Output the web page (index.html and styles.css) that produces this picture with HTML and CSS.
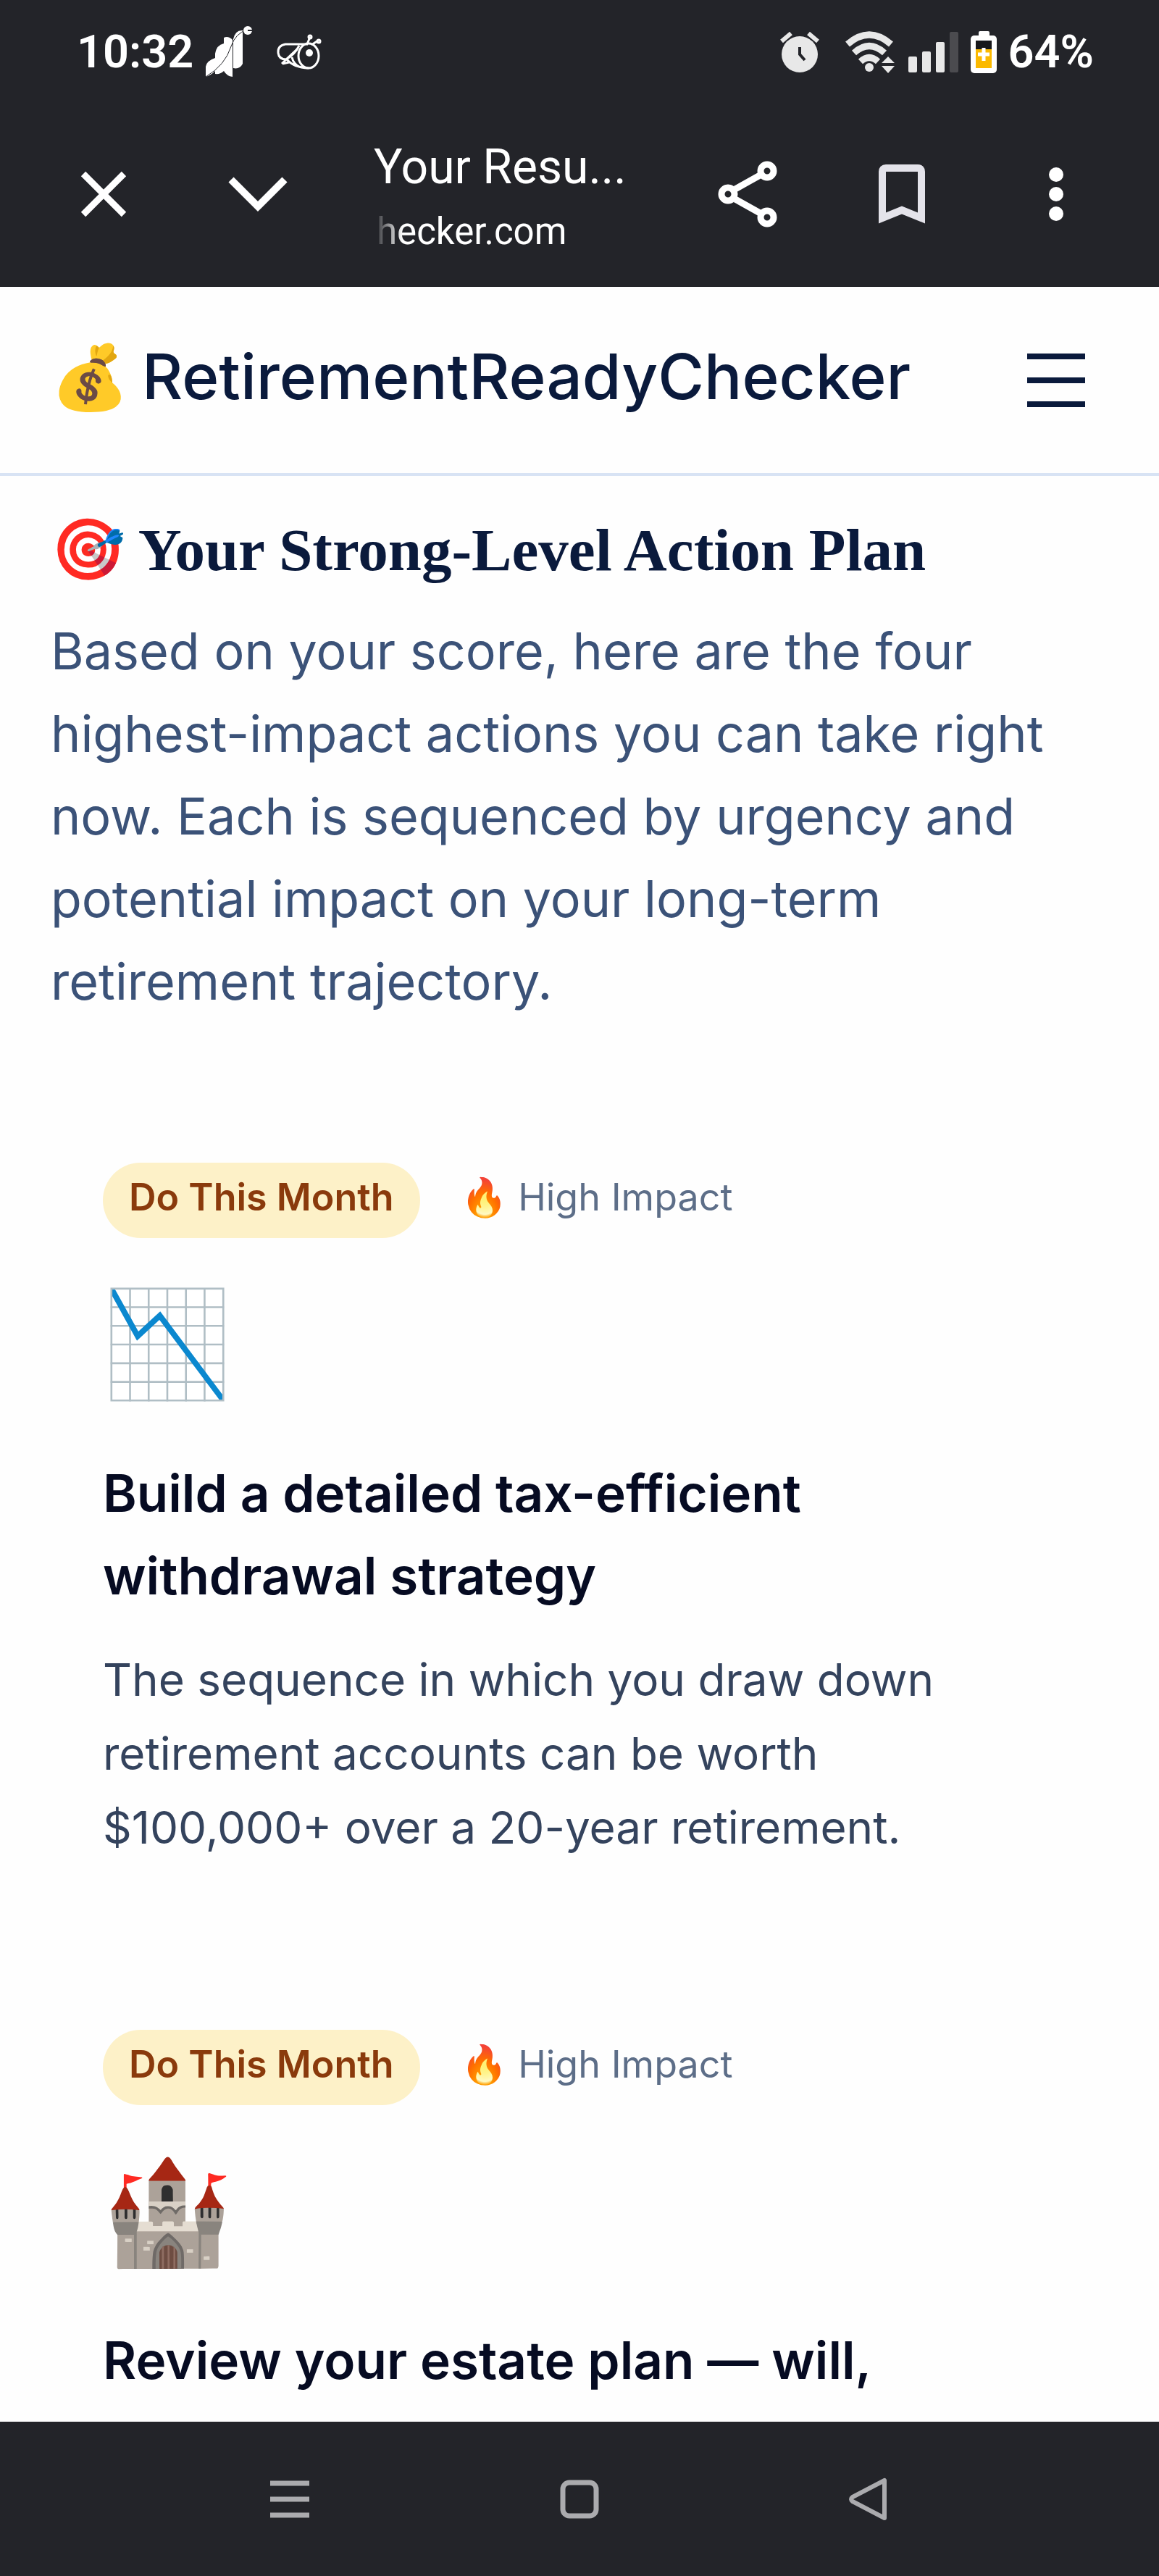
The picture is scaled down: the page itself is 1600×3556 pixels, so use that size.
FILE: index.html
```html
<!DOCTYPE html>
<html lang="en">
<head>
<meta charset="utf-8">
<meta name="viewport" content="width=device-width, initial-scale=1">
<title>Your Results</title>
<link rel="stylesheet" href="styles.css">
</head>
<body>
<div class="chrome">
  <div class="status">
    <div class="status-side">
      <span class="clock">10:32</span>
      <svg class="app-butterfly" width="66" height="72" viewBox="0 0 66 72" fill="#fff" aria-hidden="true">
        <path d="M1 70V56q1-8 13-12V62Q8 68 1 70z"/>
        <path d="M14 66V38q2-12 12-14V62q-5 5-12 4z"/>
        <path d="M26 62V16q6-3 12 3V70q-8-1-12-8z"/>
        <path d="M39 58V18Q42 5 52 6V52q-4 8-13 6z"/>
        <path d="M1 70Q28 54 36 28Q42 10 58 5" fill="none" stroke="#232429" stroke-width="1"/>
        <circle cx="59" cy="6" r="6"/><path d="M59 6h7" stroke="#232429" stroke-width="2"/>
      </svg>
      <svg class="app-bee" width="66" height="52" viewBox="0 0 66 52" fill="none" stroke="#fff" stroke-width="3" aria-hidden="true">
        <path d="M44 15H13Q2 17 3 27Q4 36 14 36Q26 29 32 17"/>
        <ellipse cx="45" cy="31" rx="14" ry="17"/>
        <path d="M29 22Q16 34 8 42M9 42L18 40M15 36Q24 47 45 48M22 33Q24 42 32 46"/>
        <path d="M43 15L47 5M49 16L58 10"/><circle cx="47" cy="5" r="2"/><circle cx="59" cy="11" r="2"/>
        <circle cx="46" cy="27" r="5" fill="#fff" stroke="none"/>
      </svg>
    </div>
    <div class="status-side">
      <svg class="alarm" width="56" height="58" viewBox="0 0 56 58" aria-hidden="true">
        <circle cx="28" cy="32" r="25" fill="#e8e8e8"/>
        <path d="M3 14L16 3M53 14L40 3" stroke="#e8e8e8" stroke-width="6"/>
        <path d="M28 22V32L35 40" stroke="#232429" stroke-width="4" fill="none"/>
      </svg>
      <svg class="wifi" width="70" height="58" viewBox="0 0 70 58" aria-hidden="true">
        <g fill="none" stroke="#e8e8e8" stroke-width="9">
          <path d="M4 18Q34-8 64 18"/><path d="M13 30Q34 11 55 30"/><path d="M22 42Q34 31 46 42"/>
        </g>
        <circle cx="34" cy="50" r="6" fill="#e8e8e8"/>
        <path d="M60 31L71 45H49zM60 62L71 46H49z" fill="#232429"/>
        <path d="M60 35L69 44H51zM60 58L69 48H51z" fill="#e8e8e8"/>
      </svg>
      <svg class="signal" width="70" height="56" viewBox="0 0 70 56" fill="#e8e8e8" aria-hidden="true">
        <rect y="34" width="12" height="22" rx="2"/><rect x="19" y="27" width="12" height="29" rx="2"/>
        <rect x="38" y="14" width="12" height="42" rx="2"/><rect x="57" width="12" height="56" rx="2" fill="#4b4b4f"/>
      </svg>
      <svg class="battery" width="36" height="58" viewBox="0 0 36 58" aria-hidden="true">
        <rect x="11" width="15" height="10" rx="2" fill="#fff"/><rect y="6" width="36" height="52" rx="5" fill="#fff"/>
        <path d="M7 13h22v12H7z" fill="#17171b"/><path d="M7 25h22v26H7z" fill="#fbb900"/>
        <path d="M18 23v18M10 32h16" stroke="#fff" stroke-width="5"/>
      </svg>
      <span class="percent">64%</span>
    </div>
  </div>
  <div class="toolbar">
    <button class="tool" aria-label="Close"><svg width="64" height="64" viewBox="0 0 64 64" fill="none" stroke="#fff" stroke-width="9"><path d="M4 4L60 60M60 4L4 60"/></svg></button>
    <button class="tool" aria-label="Minimise"><svg width="82" height="50" viewBox="0 0 82 50" fill="none" stroke="#fff" stroke-width="10"><path d="M4 5L41 42L78 5"/></svg></button>
    <div class="page-info">
      <span class="page-title">Your Resu...</span>
      <span class="page-url">hecker.com</span>
    </div>
    <button class="tool" aria-label="Share"><svg width="82" height="92" viewBox="0 0 82 92" fill="none" stroke="#fff" stroke-width="9"><path d="M24 39L58 20M24 53L58 72"/><circle cx="14" cy="46" r="9"/><circle cx="68" cy="14" r="9"/><circle cx="68" cy="78" r="9"/></svg></button>
    <button class="tool" aria-label="Bookmark"><svg width="66" height="82" viewBox="0 0 66 82" fill="none" stroke="#e4e3ea" stroke-width="10"><path d="M6 74V10Q6 5 11 5H55Q60 5 60 10V74L33 63z"/></svg></button>
    <button class="tool" aria-label="More"><svg width="20" height="74" viewBox="0 0 20 74" fill="#fff"><circle cx="10" cy="10" r="10"/><circle cx="10" cy="37" r="10"/><circle cx="10" cy="64" r="10"/></svg></button>
  </div>
</div>

<header class="site-header">
  <a class="brand" href="#"><span>💰</span><span>RetirementReadyChecker</span></a>
  <button class="menu" aria-label="Menu"><span></span><span></span><span></span></button>
</header>

<main class="content">
  <h1 class="plan-title">🎯 Your Strong-Level Action Plan</h1>
  <p class="plan-intro">Based on your score, here are the four highest-impact actions you can take right now. Each is sequenced by urgency and potential impact on your long-term retirement trajectory.</p>
  <div class="cards">
    <article class="card">
      <div class="tags"><span class="pill">Do This Month</span><span class="impact">🔥 High Impact</span></div>
      <div class="card-icon">📉</div>
      <h2 class="card-title">Build a detailed tax-efficient withdrawal strategy</h2>
      <p class="card-text">The sequence in which you draw down retirement accounts can be worth $100,000+ over a 20-year retirement.</p>
    </article>
    <article class="card">
      <div class="tags"><span class="pill">Do This Month</span><span class="impact">🔥 High Impact</span></div>
      <div class="card-icon">🏰</div>
      <h2 class="card-title">Review your estate plan — will,</h2>
    </article>
  </div>
</main>

<nav class="system-nav">
  <button aria-label="Recent apps"><svg width="54" height="52" viewBox="0 0 54 52" stroke="#ababae" stroke-width="7"><path d="M0 4H54M0 26H54M0 48H54"/></svg></button>
  <button aria-label="Home"><svg width="54" height="54" viewBox="0 0 54 54" fill="none" stroke="#ababae" stroke-width="7"><rect x="4" y="4" width="46" height="46" rx="9"/></svg></button>
  <button aria-label="Back"><svg width="58" height="62" viewBox="0 0 58 62" fill="none" stroke="#ababae" stroke-width="6" stroke-linejoin="round"><path d="M50 5V57L6 34Q2 31 6 28z"/></svg></button>
</nav>
</body>
</html>
```
FILE: styles.css
```css
* { box-sizing: border-box; }

body {
  margin: 0;
  min-height: 100vh;
  display: flex;
  flex-direction: column;
  background: #fefefe;
  font-family: Inter, sans-serif;
  color: #0a1a3c;
}

h1, h2, p { margin: 0; }

button {
  border: 0;
  padding: 0;
  background: none;
  display: flex;
  align-items: center;
  justify-content: center;
}

svg { display: block; flex: none; }

/* Browser chrome */
.chrome {
  background: #232429;
  color: #fff;
  font-family: Roboto, sans-serif;
}

.status {
  height: 144px;
  padding: 0 90px 0 106px;
  display: flex;
  align-items: center;
  justify-content: space-between;
}

.status-side { display: flex; align-items: center; }

.clock, .percent { font-size: 63px; line-height: 76px; font-weight: 600; }

.app-butterfly { margin-left: 16px; }
.app-bee { margin-left: 32px; }
.wifi { margin-left: 34px; }
.signal { margin-left: 18px; }
.battery { margin: 0 16px; }

.toolbar {
  height: 252px;
  padding: 0 36px 4px;
  display: flex;
  align-items: center;
}

.tool { width: 213px; height: 213px; }

.page-info {
  flex: 1;
  min-width: 0;
  padding: 18px 0 0 54px;
  display: flex;
  flex-direction: column;
  white-space: nowrap;
}

.page-title { font-size: 66px; line-height: 86px; }

.page-url {
  padding-left: 4px;
  font-size: 51px;
  line-height: 92px;
  -webkit-mask-image: linear-gradient(to right, transparent, #000 40px);
  mask-image: linear-gradient(to right, transparent, #000 40px);
}

/* Site header */
.site-header {
  height: 261px;
  padding: 0 102px 0 70px;
  display: flex;
  align-items: center;
  justify-content: space-between;
  border-bottom: 4px solid #d8e3f4;
}

.brand {
  padding-bottom: 10px;
  display: flex;
  gap: 18px;
  font-size: 87px;
  line-height: 100px;
  font-weight: 500;
  color: inherit;
  text-decoration: none;
}

.menu { flex-direction: column; gap: 25px; }
.menu span { width: 80px; height: 8px; background: #0a1a3c; }

/* Action plan */
.content { flex: 1; padding: 52px 70px 0; }

.plan-title {
  font-family: "Liberation Serif", serif;
  font-size: 83px;
  line-height: 100px;
  font-weight: 700;
}

.plan-intro {
  margin-top: 33px;
  font-size: 70px;
  line-height: 114px;
  color: #3b5278;
}

.cards {
  margin-top: 121px;
  display: flex;
  flex-direction: column;
  gap: 84px;
}

.card { padding: 72px; }
.card:last-child { padding-bottom: 0; }

.tags {
  display: flex;
  align-items: baseline;
  gap: 56px;
  font-size: 52px;
  line-height: 80px;
}

.pill {
  padding: 8px 36px 16px;
  border-radius: 52px;
  background: #fdf1c8;
  color: #8a3a0c;
  font-weight: 600;
}

.impact { color: #5d6e88; }

.card-icon {
  margin: 36px 0 43px;
  font-size: 143px;
  line-height: 216px;
}

.card-title {
  font-size: 71px;
  line-height: 114px;
  font-weight: 600;
  color: #060b22;
}

.card-text {
  margin-top: 36px;
  font-size: 62px;
  line-height: 102px;
  color: #34435d;
}

/* System navigation */
.system-nav {
  height: 213px;
  padding: 0 200px;
  display: grid;
  grid-template-columns: repeat(3, 1fr);
  background: #232429;
}
```
